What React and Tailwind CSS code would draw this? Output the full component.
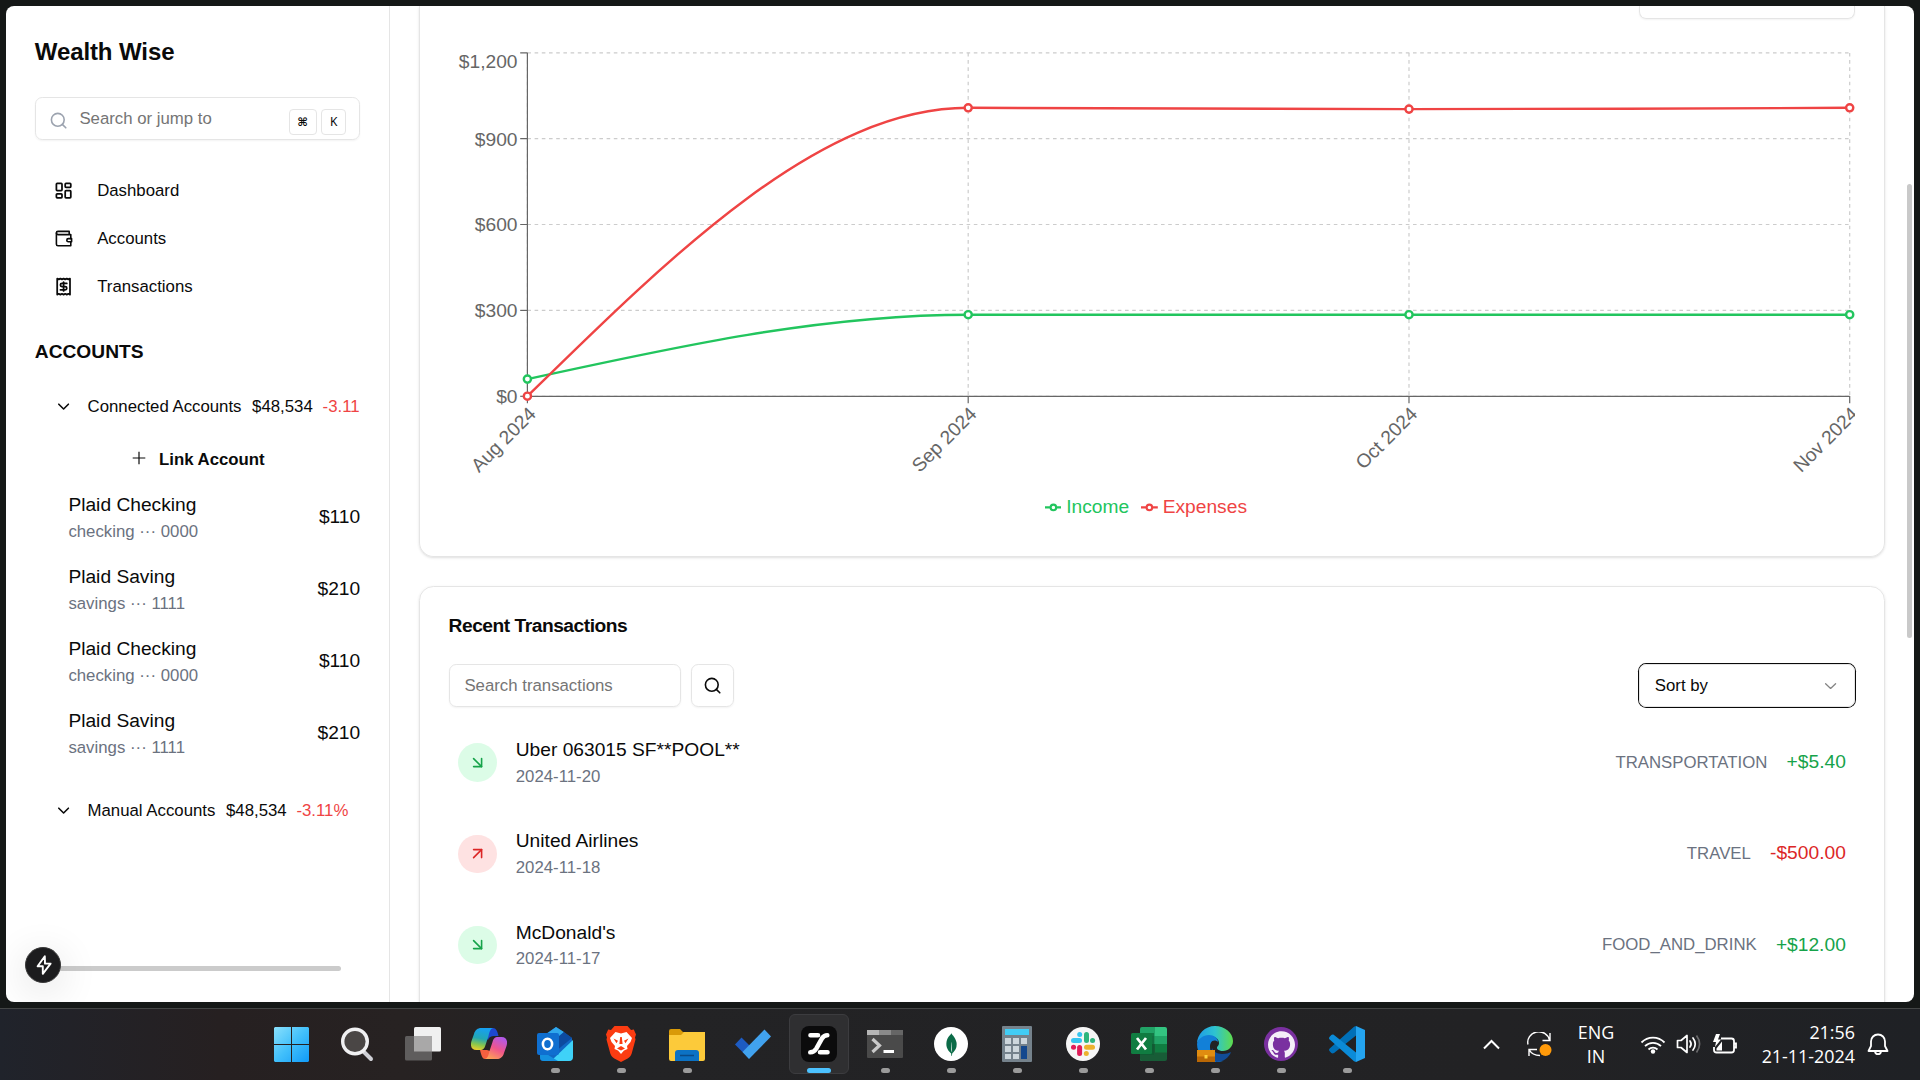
import React from "react";
import {
  ArrowDownRight,
  ArrowUpRight,
  ChevronDown,
  LayoutDashboard,
  Search,
} from "lucide-react";
import { SiGithub, SiMongodb } from "react-icons/si";

const accounts = [
  { name: "Plaid Checking", kind: "checking ··· 0000", amount: "$110" },
  { name: "Plaid Saving", kind: "savings ··· 1111", amount: "$210" },
  { name: "Plaid Checking", kind: "checking ··· 0000", amount: "$110" },
  { name: "Plaid Saving", kind: "savings ··· 1111", amount: "$210" },
];

const transactions = [
  { name: "Uber 063015 SF**POOL**", date: "2024-11-20", category: "TRANSPORTATION", amount: "+$5.40", credit: true },
  { name: "United Airlines", date: "2024-11-18", category: "TRAVEL", amount: "-$500.00", credit: false },
  { name: "McDonald's", date: "2024-11-17", category: "FOOD_AND_DRINK", amount: "+$12.00", credit: true },
];

function WalletIcon() {
  return (
    <svg className="size-[19.2px]" viewBox="0 0 24 24" fill="none" stroke="currentColor" strokeWidth="2" strokeLinecap="round" strokeLinejoin="round">
      <path d="M21 12V7H5a2 2 0 0 1 0-4h14v4" />
      <path d="M3 5v14a2 2 0 0 0 2 2h16v-5" />
      <path d="M18 12a2 2 0 0 0 0 4h4v-4Z" />
    </svg>
  );
}

function ReceiptIcon() {
  return (
    <svg className="size-[19.2px]" viewBox="0 0 24 24" fill="none" stroke="currentColor" strokeWidth="2.2" strokeLinecap="round" strokeLinejoin="round">
      <path d="M4 2v20l2-1 2 1 2-1 2 1 2-1 2 1 2-1 2 1V2l-2 1-2-1-2 1-2-1-2 1-2-1-2 1Z" />
      <path d="M16 8h-6a2 2 0 1 0 0 4h4a2 2 0 1 1 0 4H8" />
      <path d="M12 17.5v-11" />
    </svg>
  );
}

function NavItem({ icon, label }) {
  return (
    <a className="flex h-[43.2px] items-center gap-6 px-[19.2px] text-[16.8px] leading-6">
      {icon}
      {label}
    </a>
  );
}

function AccountGroup({ label, change }) {
  return (
    <div className="flex h-[43.2px] items-center overflow-hidden pl-[19.2px] text-[16.8px] leading-6 whitespace-nowrap">
      <ChevronDown className="mr-[14.4px] size-[19.2px] shrink-0" />
      <span>{label}</span>
      <span className="ml-[10.6px]">$48,534</span>
      <span className="ml-[9.8px] text-[#ef4444]">{change}</span>
    </div>
  );
}

function Sidebar() {
  return (
    <aside className="relative flex w-[384px] shrink-0 flex-col border-r border-[#e5e5e5] p-[28.8px]">
      <h1 className="text-2xl leading-[33.6px] font-bold tracking-[-0.1px]">Wealth Wise</h1>

      <div className="mt-[28.8px] flex h-[43.2px] shrink-0 items-center rounded-[7.2px] border border-[#e5e5e5] pr-[13px] pl-[13.4px] shadow-xs">
        <Search className="mt-1 size-[19.2px] shrink-0 text-[#9ca3af]" />
        <span className="ml-[11px] flex-1 text-[16.8px] leading-6 text-[#757575]">Search or jump to</span>
        <kbd className="mt-[7px] flex h-[26px] w-7 items-center justify-center rounded-[4px] border border-[#e5e5e5] pr-px font-['DejaVu_Sans',sans-serif] text-[11.5px] font-bold">⌘</kbd>
        <kbd className="mt-[7px] ml-1 flex h-[26px] w-[25px] items-center justify-center rounded-[4px] border border-[#e5e5e5] font-['Noto_Sans',sans-serif] text-[12px]">K</kbd>
      </div>

      <nav className="mt-[28.8px] flex flex-col gap-[4.8px]">
        <NavItem icon={<LayoutDashboard className="size-[19.2px]" strokeWidth={2.2} />} label="Dashboard" />
        <NavItem icon={<WalletIcon />} label="Accounts" />
        <NavItem icon={<ReceiptIcon />} label="Transactions" />
      </nav>

      <h2 className="mt-[29.6px] text-[19.2px] leading-[28.8px] font-semibold">ACCOUNTS</h2>

      <div className="mt-[18.4px]">
        <AccountGroup label="Connected Accounts" change="-3.11" />
        <button className="mt-[10.4px] flex h-[43.2px] w-full items-center pl-[95.4px] text-[16.8px] leading-6 font-semibold">
          <svg className="mr-[10.8px] -mt-1 size-[18px]" viewBox="0 0 15 15" fill="currentColor">
            <path d="M7 2.25h1v4.75h4.75v1H8v4.75H7V8H2.25V7H7z" />
          </svg>
          Link Account
        </button>
        <ul className="mt-[9.6px] flex flex-col gap-[19.2px] pl-[33.6px]">
          {accounts.map((a, i) => (
            <li key={i} className="flex items-center justify-between">
              <div>
                <p className="text-[19.2px] leading-[28.8px]">{a.name}</p>
                <p className="text-[16.8px] leading-6 text-[#6b7280]">{a.kind}</p>
              </div>
              <span className="text-[19.2px] leading-[28.8px]">{a.amount}</span>
            </li>
          ))}
        </ul>
      </div>

      <div className="mt-[28.8px]">
        <AccountGroup label="Manual Accounts" change="-3.11%" />
      </div>

      <div className="absolute bottom-[31px] left-[29px] h-[5px] w-[306px] rounded-full bg-[#cbcbcb]" />
      <div className="absolute bottom-[19px] left-[19px] flex size-9 items-center justify-center rounded-full border border-[#3a3a3a] bg-[#1c1c1e] shadow-[0_8px_40px_rgba(0,0,0,0.14)]">
        <svg className="ml-px h-5 w-4 text-white" viewBox="0 0 16 20" fill="none" stroke="currentColor" strokeWidth="1.9" strokeLinejoin="round">
          <path d="M8.8 1.2L1.6 11.2h5.2v7.6L14.6 8.6H9z" />
        </svg>
      </div>
    </aside>
  );
}

const GRID_X = [78.4, 519.2, 960, 1400.7];
const GRID_Y = [52.9, 138.6, 224.5, 310.4, 396.3];
const Y_LABELS = [
  ["$1,200", 68],
  ["$900", 145.6],
  ["$600", 231],
  ["$300", 317],
  ["$0", 402.8],
];
const MONTHS = ["Aug 2024", "Sep 2024", "Oct 2024", "Nov 2024"];

function Series({ color, values }) {
  const [a, b, c, d] = values;
  const dx = (GRID_X[1] - GRID_X[0]) / 3;
  const path =
    `M${GRID_X[0]},${a}C${GRID_X[0] + dx},${(a + b) / 2},${GRID_X[1] - dx},${b},${GRID_X[1]},${b}` +
    `C${GRID_X[1] + dx},${b},${GRID_X[2] - dx},${c},${GRID_X[2]},${c}` +
    `C${GRID_X[2] + dx},${c},${GRID_X[3] - dx},${(c + d) / 2},${GRID_X[3]},${d}`;
  return (
    <g stroke={color} strokeWidth="2.4">
      <path d={path} fill="none" />
      {values.map((v, i) => (
        <circle key={i} cx={GRID_X[i]} cy={v} r="3.6" fill="#fff" />
      ))}
    </g>
  );
}

function Chart() {
  return (
    <svg className="block h-[480px] w-[1406.4px] overflow-hidden font-['Liberation_Sans',Arial,sans-serif] text-[19.2px]" viewBox="0 6 1406.4 480">
      <g stroke="#ccc" strokeWidth="1.2" strokeDasharray="3.6 3.6">
        {GRID_Y.map((y) => (
          <line key={y} x1={GRID_X[0]} x2={GRID_X[3]} y1={y} y2={y} />
        ))}
        {GRID_X.map((x) => (
          <line key={x} x1={x} x2={x} y1={GRID_Y[0]} y2={GRID_Y[4]} />
        ))}
      </g>
      <g stroke="#666" strokeWidth="1.2">
        <line x1={GRID_X[0]} x2={GRID_X[3]} y1="396.300" y2="396.300" />
        <line x1={GRID_X[0]} x2={GRID_X[0]} y1="52.700" y2="396.300" />
        {GRID_Y.map((y) => (
          <line key={y} x1={GRID_X[0] - 7.2} x2={GRID_X[0]} y1={y} y2={y} />
        ))}
        {GRID_X.map((x) => (
          <line key={x} x1={x} x2={x} y1="396" y2="403.200" />
        ))}
      </g>
      <g fill="#666" textAnchor="end">
        {Y_LABELS.map(([t, y]) => (
          <text key={t} x={GRID_X[0] - 9.9} y={y}>{t}</text>
        ))}
        {MONTHS.map((m, i) => (
          <text key={m} transform={`translate(${GRID_X[i]} 405.600) rotate(-45)`} y="13.600">{m}</text>
        ))}
      </g>
      <Series color="#22c55e" values={[379.1, 314.7, 314.7, 314.7]} />
      <Series color="#ef4444" values={[396.2, 107.8, 109.1, 107.8]} />
    </svg>
  );
}

function LegendItem({ label, className }) {
  return (
    <span className={className}>
      <svg className="mr-[4.800px] size-[16.800px]" viewBox="0 0 32 32" fill="none" stroke="currentColor" strokeWidth="4">
        <path d="M0,16h10.667A5.333,5.333,0,1,1,21.333,16H32M21.333,16A5.333,5.333,0,1,1,10.667,16" />
      </svg>
      {label}
    </span>
  );
}

function ChartCard() {
  return (
    <section className="flex h-[551.2px] shrink-0 flex-col rounded-b-[14.4px] border border-t-0 border-[#e5e5e5] px-[28.8px] shadow-sm">
      <div className="-mb-[13px] h-[13px] w-[216px] self-end rounded-b-[7.2px] border border-t-0 border-[#e5e5e5] shadow-xs" />
      <Chart />
      <div className="mt-[7px] flex justify-center gap-3 pr-[12.4px] text-[19.2px] leading-[28.8px]">
        <LegendItem label="Income" className="flex items-center text-[#22c55e]" />
        <LegendItem label="Expenses" className="flex items-center text-[#ef4444]" />
      </div>
    </section>
  );
}

function TransactionRow({ t }) {
  return (
    <li className="flex items-center justify-between px-[9.6px]">
      <div className="flex items-center gap-[19.2px]">
        {t.credit ? (
          <span className="flex size-[38.4px] items-center justify-center rounded-full bg-[#dcfce7] text-[#16a34a]">
            <ArrowDownRight className="size-[19.2px]" />
          </span>
        ) : (
          <span className="flex size-[38.4px] items-center justify-center rounded-full bg-[#fee2e2] text-[#dc2626]">
            <ArrowUpRight className="size-[19.2px]" />
          </span>
        )}
        <div>
          <p className="text-[19.2px] leading-[28.8px]">{t.name}</p>
          <p className="text-[16.8px] leading-6 text-[#6b7280]">{t.date}</p>
        </div>
      </div>
      <div className="flex items-center gap-[19.2px]">
        <span className="text-[16.8px] leading-6 text-[#6b7280]">{t.category}</span>
        {t.credit ? (
          <span className="text-[19.2px] leading-[28.8px] text-[#16a34a]">{t.amount}</span>
        ) : (
          <span className="text-[19.2px] leading-[28.8px] text-[#dc2626]">{t.amount}</span>
        )}
      </div>
    </li>
  );
}

function TransactionsCard() {
  return (
    <section className="h-[480px] shrink-0 rounded-[14.4px] border border-[#e5e5e5] px-[28.8px] pt-[28.8px] shadow-sm">
      <h3 className="text-[19.2px] leading-[19.2px] font-semibold tracking-tight">Recent Transactions</h3>
      <div className="mt-[29px] flex h-[43.2px] items-center text-[16.8px] leading-6">
        <div className="flex h-full w-[232.6px] items-center rounded-[7.2px] border border-[#e5e5e5] px-[14.8px] pt-px text-[#757575] shadow-xs">Search transactions</div>
        <button className="ml-[9.6px] flex h-full w-[43.2px] items-center justify-center rounded-[7.2px] border border-[#e5e5e5] shadow-xs">
          <Search className="size-[19.2px]" />
        </button>
        <button className="ml-auto flex h-full w-[216px] items-center justify-between rounded-[7.2px] border border-[#e5e5e5] pt-px pr-[14.4px] pl-[14.4px] ring-1 ring-[#0a0a0a]">
          Sort by
          <svg className="size-[19.2px] opacity-50" viewBox="0 0 15 15" fill="none" stroke="currentColor" strokeLinecap="round" strokeLinejoin="round">
            <path d="M3.6 6.100L7.500 9.700L11.400 6.100" />
          </svg>
        </button>
      </div>
      <ul className="mt-[29px] flex flex-col gap-[38.4px]">
        {transactions.map((t) => (
          <TransactionRow key={t.name} t={t} />
        ))}
      </ul>
    </section>
  );
}

function OutlookIcon() {
  return (
    <svg className="size-9" viewBox="0 0 36 36">
      <path d="M3 12L19 1l16 11v20a3 3 0 0 1-3 3H6a3 3 0 0 1-3-3z" fill="#1068c4" />
      <path d="M5 11L19 1l8 5-12 10z" fill="#2fa8ec" />
      <path d="M27 6l8 6-16 13-4-9z" fill="#0d4ba0" />
      <path d="M36 14v17a4 4 0 0 1-4 4H14z" fill="#3fd2f8" />
      <path d="M3 24l18 11H7a4 4 0 0 1-4-4z" fill="#1490df" />
      <rect x="0" y="7" width="22" height="22" rx="2" fill="#0f6fd0" />
      <ellipse cx="10.500" cy="18" rx="4.600" ry="5.300" fill="none" stroke="#fff" strokeWidth="2.600" />
    </svg>
  );
}

function CopilotIcon() {
  return (
    <svg className="size-9" viewBox="0 0 36 36">
      <defs>
        <linearGradient id="copilotLeft" x1="0.4" y1="0" x2="0.2" y2="1">
          <stop offset="0" stopColor="#17a0f0" />
          <stop offset="0.45" stopColor="#22a7b4" />
          <stop offset="0.75" stopColor="#8cc84a" />
          <stop offset="1" stopColor="#f0cf2c" />
        </linearGradient>
        <linearGradient id="copilotRight" x1="0.7" y1="0" x2="0.2" y2="1">
          <stop offset="0" stopColor="#b259e8" />
          <stop offset="0.5" stopColor="#f0558c" />
          <stop offset="1" stopColor="#fda455" />
        </linearGradient>
      </defs>
      <path d="M17 2h5c3 0 4.500 3 5.500 8H23c-3 0-5 1-6 4l-4-5z" fill="#1c48d0" />
      <path d="M9 24h7l6 2-3 7h-5c-3 0-4-5-5-9z" fill="#f3603f" />
      <path d="M10 2h12c-3 1-3.500 4-4.500 8l-3 9c-1 4-3 5-5 5H5.500c-5 0-6.500-4-5-9L3 8c1-4 4-6 7-6z" fill="url(#copilotLeft)" />
      <path d="M26 33H14c3-1 3.500-4 4.500-8l3-9c1-4 3-5 5-5h4c5 0 6.500 4 5 9L33 27c-1 4-4 6-7 6z" fill="url(#copilotRight)" />
    </svg>
  );
}

function SlackIcon() {
  return (
    <svg className="size-9" viewBox="0 0 36 36">
      <circle cx="18" cy="18" r="17" fill="#f6f6f6" />
      <g strokeWidth="5" strokeLinecap="round">
        <path d="M8.500 14.500h6" stroke="#36c5f0" />
        <path d="M14.700 8.400v.1" stroke="#36c5f0" />
        <path d="M21.500 8.500v6" stroke="#2eb67d" />
        <path d="M27.500 14.600h.1" stroke="#2eb67d" />
        <path d="M21.500 21.300h6" stroke="#ecb22e" />
        <path d="M21.300 27.500v.1" stroke="#ecb22e" />
        <path d="M14.600 21.500v6" stroke="#e01e5a" />
        <path d="M8.500 21.300h.1" stroke="#e01e5a" />
      </g>
    </svg>
  );
}

function ExcelIcon() {
  return (
    <svg className="size-9" viewBox="0 0 36 36">
      <path d="M9 3a2 2 0 0 1 2-2h13v34H11a2 2 0 0 1-2-2z" fill="#21a366" />
      <path d="M24 1h10a2 2 0 0 1 2 2v7H24z" fill="#33c481" />
      <path d="M9 10h15v8H9z" fill="#1c9158" />
      <path d="M24 10h12v8H24z" fill="#21a366" />
      <path d="M9 18h27v15a2 2 0 0 1-2 2H11a2 2 0 0 1-2-2z" fill="#185c37" />
      <path d="M24 18h12v8.500H24z" fill="#107c41" />
      <path d="M9 7h14v22H9z" fill="#0b5a30" opacity="0.6" />
      <rect x="0" y="7" width="21" height="21" rx="1.500" fill="#107c41" />
      <path d="M6 12l9 11.500M15 12L6 23.500" stroke="#fff" strokeWidth="2.700" />
    </svg>
  );
}

function EdgeIcon() {
  return (
    <svg className="size-9" viewBox="0 0 36 36">
      <defs>
        <linearGradient id="edgeTop" x1="0" y1="0.4" x2="1" y2="0.4">
          <stop offset="0" stopColor="#1e9be8" />
          <stop offset="0.5" stopColor="#2ec3d0" />
          <stop offset="1" stopColor="#5fdc4d" />
        </linearGradient>
      </defs>
      <path d="M0 18C0 8 8 0 18 0s18 7 18 15c0 6-5 10-10 10-4 0-6-2-6-3 0-2 2-2 2-5 0-4-4-7-9-7C6 10 1 14 0 18z" fill="url(#edgeTop)" />
      <path d="M0 18c1-5 6-9 12-9 5 0 9 3 9 7-1-1-2-1.500-3.500-1.500C14 14.500 13 18 13 21c0 7 5 14 13 14-3 1-6 1-8 1C8 36 0 28 0 18z" fill="#1280d8" />
      <path d="M15 22c1 3 5 6 10 6 4 0 7-1 9-2-2 6-8 10-15 10-3-3-5-9-4-14z" fill="#114c97" />
      <rect x="0" y="24" width="18" height="12" fill="#b96705" />
      <rect x="0" y="24" width="18" height="6.500" fill="#e08c10" />
      <rect x="7.500" y="29" width="3" height="3.500" fill="#ffd23c" />
    </svg>
  );
}

function VsCodeIcon() {
  return (
    <svg className="size-9" viewBox="0 0 36 36">
      <path d="M27 0v9.500L5 27c-1 .6-2 .5-2.700-.1L.7 25.300c-.9-.9-.9-2 0-2.800L25 .8z" fill="#0070b8" />
      <path d="M27 36v-9.500L5 9c-1-.6-2-.5-2.700.1L.7 10.700c-.9.900-.9 2 0 2.800L25 35.200z" fill="#0b8bd8" />
      <path d="M27 0L36 4v28l-9 4z" fill="#24a4f0" />
    </svg>
  );
}

const icons = {
  windows: (
    <svg className="size-[35px]" viewBox="0 0 35 35">
      <defs>
        <linearGradient id="winFill" gradientUnits="userSpaceOnUse" x1="0" y1="0" x2="35" y2="35">
          <stop offset="0" stopColor="#8ae0fc" />
          <stop offset="0.5" stopColor="#42c0fb" />
          <stop offset="1" stopColor="#109af8" />
        </linearGradient>
      </defs>
      <path d="M1 0h16v17H0V1zM18 0h16l1 1v16H18zM0 18h17v17H1l-1-1zM18 18h17v16l-1 1H18z" fill="url(#winFill)" />
    </svg>
  ),
  search: (
    <svg className="size-9" viewBox="0 0 36 36" fill="none">
      <path d="M24.500 25.500L32 33" stroke="#cfd0d6" strokeWidth="4" strokeLinecap="round" />
      <circle cx="16" cy="15.500" r="12.300" fill="#4a4645" stroke="#f0f0f2" strokeWidth="3.400" />
    </svg>
  ),
  taskview: (
    <svg className="size-9" viewBox="0 0 36 36">
      <rect x="9" y="1" width="27" height="24.500" rx="1.500" fill="#f0f0f0" />
      <rect x="0" y="10" width="27" height="24.500" rx="1.500" fill="#5f5d5d" />
      <rect x="9" y="10" width="18" height="15.500" fill="#a9a8a8" />
    </svg>
  ),
  copilot: <CopilotIcon />,
  outlook: <OutlookIcon />,
  brave: (
    <svg className="size-9" viewBox="0 0 36 36">
      <path d="M11.500 0h13l3.500 4 2.800-.5L33 8.500l-1 3 .5 2-3.800 14c-1 3-2 3.500-4 5L18 36l-6.700-3.500c-2-1.500-3-2-4-5l-3.800-14 .5-2-1-3L5.200 3.500 8 4z" fill="#fb3c12" />
      <path d="M12.500 6l5.500 1.500L23.500 6l5.500 6-1.500 4-3.500 4 .5 3-3.500 1.500L18 28l-3-3.500-3.500-1.500.5-3L8.500 16 7 12z" fill="#fff" />
      <path d="M10.500 12.500l4.500 2.200-1.500 2.600zM25.500 12.500l-4.500 2.200 1.500 2.600zM18 20l-4 2.500 4 2 4-2zM17.200 11h1.600l.8 7h-3.200z" fill="#fb3c12" />
    </svg>
  ),
  explorer: (
    <svg className="size-9" viewBox="0 0 36 36">
      <path d="M0 5a2 2 0 0 1 2-2h9l3 3h20a2 2 0 0 1 2 2v4H0z" fill="#d99a08" />
      <path d="M0 9h12l3-3h21v27a2 2 0 0 1-2 2H2a2 2 0 0 1-2-2z" fill="#fcca3a" />
      <path d="M6 35V27a3 3 0 0 1 3-3h18a3 3 0 0 1 3 3v8z" fill="#0c72c4" />
      <path d="M11 29.500h14" stroke="#0a4a86" strokeWidth="1.500" />
    </svg>
  ),
  todo: (
    <svg className="size-9" viewBox="0 0 36 36">
      <path d="M0 18.500l6.500-7 14 14-6.500 7z" fill="#1d5bc2" />
      <path d="M7.500 26L29.500 3.500 36 10.500 14 33z" fill="#41a2ee" />
    </svg>
  ),
  zed: (
    <svg className="size-9 shrink-0" viewBox="0 0 36 36">
      <rect width="36" height="36" rx="8" fill="#0b0b0c" />
      <path d="M9.500 9.300H17M26.300 9.200c-2.300 0-3.800 1-5.300 3.200L15.300 22.600c-1.400 2.300-3 3.600-6 3.700M19 26.300h7.500" stroke="#fff" strokeWidth="4.600" fill="none" strokeLinecap="round" />
    </svg>
  ),
  terminal: (
    <svg className="size-9" viewBox="0 0 36 36">
      <rect y="4" width="36" height="28" rx="1" fill="#4a4a4a" />
      <path d="M0 4h12v5H0z" fill="#b5b5b5" />
      <path d="M12 4h12v5H12z" fill="#8a8a8a" />
      <path d="M24 4h12v5H24z" fill="#666" />
      <path d="M5.500 13l7 6.500-7 6.500" stroke="#c9c9c9" strokeWidth="3.200" fill="none" />
      <path d="M16.500 25.500H27" stroke="#fff" strokeWidth="3" />
    </svg>
  ),
  mongo: (
    <span className="flex size-[34px] items-center justify-center rounded-full bg-white text-[#0b6b47]">
      <SiMongodb className="size-[23px]" />
    </span>
  ),
  calculator: (
    <svg className="size-9" viewBox="0 0 36 36">
      <rect x="3" width="30" height="36" rx="1" fill="#75828c" />
      <rect x="6" y="3" width="24" height="6" fill="#42cdf5" />
      <g fill="#cdd6dc">
        <path d="M6 12h6v6H6zM14 12h6v6h-6zM22 12h6v6h-6zM6 20h6v6H6zM14 20h6v6h-6zM6 28h6v5H6zM14 28h6v5h-6z" />
      </g>
      <path d="M22 20h6v13h-6z" fill="#14488e" />
    </svg>
  ),
  slack: <SlackIcon />,
  excel: <ExcelIcon />,
  edge: <EdgeIcon />,
  github: (
    <span className="flex size-[34px] items-center justify-center rounded-full bg-[#7a30a0] text-[#f4eef8]">
      <SiGithub className="size-[27px]" />
    </span>
  ),
  vscode: <VsCodeIcon />,
};

const apps = [
  ["windows", false], ["search", false], ["taskview", false], ["copilot", false],
  ["outlook", true], ["brave", true], ["explorer", true], ["todo", false],
  ["zed", true], ["terminal", true], ["mongo", true], ["calculator", true],
  ["slack", true], ["excel", true], ["edge", true], ["github", true], ["vscode", true],
];

function TaskbarApp({ name, running }) {
  if (name === "zed") {
    return (
      <div className="flex h-[60px] w-[60px] flex-col items-center rounded-md border border-[#3c3c3f] bg-[#2f2f31] pt-[11px]">
        {icons[name]}
        <span className="mt-[6px] h-[5px] w-6 shrink-0 rounded-full bg-[#4cc2ff]" />
      </div>
    );
  }
  return (
    <div className="flex h-[60px] w-[60px] flex-col items-center pt-3">
      <span className="flex size-9 items-center justify-center">{icons[name]}</span>
      {running && <span className="mt-[6px] h-[5px] w-[9px] rounded-full bg-[#9b9b9b]" />}
    </div>
  );
}

function Tray() {
  return (
    <div className="ml-auto flex h-[60px] items-center font-['Open_Sans','Noto_Sans',sans-serif] text-[17.9px] leading-6 text-white">
      <svg className="h-[11px] w-[17px]" viewBox="0 0 17 11" fill="none" stroke="currentColor" strokeWidth="2">
        <path d="M1 9.500l7.500-7.500L16 9.500" />
      </svg>
      <svg className="ml-[27px] h-[25px] w-[25px]" viewBox="0 0 25 25" fill="none" stroke="currentColor" strokeWidth="1.400">
        <path d="M1 12.500A11 10.500 0 0 1 22.500 8M23 1v7.500h-7.500M2 24v-6.500h8M2 17.500c3 5.500 8 6 11 6" />
        <circle cx="18.500" cy="18" r="6" fill="#ff9a0a" stroke="none" />
      </svg>
      <div className="ml-[26px] flex w-[36px] flex-col items-center">
        <span>ENG</span>
        <span>IN</span>
      </div>
      <svg className="ml-[26px] h-[19px] w-[26px]" viewBox="0 0 26 19" fill="none" stroke="currentColor" strokeWidth="1.800">
        <path d="M1.500 7.500a16 16 0 0 1 23 0M5 11.200a11.300 11.300 0 0 1 16 0M8.500 14.500a6.500 6.500 0 0 1 9 0" />
        <circle cx="13" cy="16.500" r="2.200" fill="currentColor" stroke="none" />
      </svg>
      <svg className="ml-[10px] h-[20px] w-[25px]" viewBox="0 0 25 20" fill="none" stroke="currentColor" strokeWidth="1.700" strokeLinejoin="round">
        <path d="M1.500 6.500h3.500l6-5v17l-6-5H1.500z" />
        <path d="M14 7c1.500 2 1.500 4 0 6M17 4c3 4 3 8 0 12" strokeLinecap="round" />
        <path d="M20.500 1.500c4 5.500 4 11.500 0 17" stroke="#6a6a6c" />
      </svg>
      <svg className="ml-[11px] h-[21px] w-[26px]" viewBox="0 0 26 21" fill="none" stroke="currentColor" strokeWidth="1.800">
        <path d="M9 4.500h10.500a2.500 2.500 0 0 1 2.500 2.500v9a2.500 2.500 0 0 1-2.500 2.500h-15A2.500 2.500 0 0 1 2 16v-3M22.500 9.500h1.500v4h-1.500" />
        <path d="M4 0L1 8h3l-1 5 6-7.500H6L8 0zM4.500 16.500v-2L10 7.500v9z" fill="currentColor" stroke="none" />
      </svg>
      <div className="ml-[23px] flex w-[94px] flex-col items-end">
        <span>21:56</span>
        <span>21-11-2024</span>
      </div>
      <svg className="ml-[12px] h-[23px] w-[22px]" viewBox="0 0 22 23" fill="none" stroke="currentColor" strokeWidth="1.800" strokeLinejoin="round">
        <path d="M11 1.500c-4 0-7 3-7 7V13l-2.500 5h19L18 13V8.500c0-4-3-7-7-7z" />
        <path d="M8 18.500c.5 3.500 5.500 3.500 6 0" />
      </svg>
    </div>
  );
}

export default function App() {
  return (
    <div className="flex h-[1080px] w-[1920px] flex-col overflow-hidden bg-[#151817] font-['Liberation_Sans',Arial,sans-serif] text-[#0a0a0a]">
      <div className="relative mx-[6px] mt-[6px] flex h-[996px] shrink-0 overflow-hidden rounded-lg bg-white">
        <Sidebar />
        <main className="flex min-w-0 flex-1 flex-col gap-[28.8px] px-[28.8px]">
          <ChartCard />
          <TransactionsCard />
        </main>
        <div className="absolute top-[178px] right-[2px] h-[454px] w-[5px] rounded-full bg-[#c9c9c9]" />
      </div>
      <footer className="mt-[6px] flex h-[72px] shrink-0 border-t border-[#434545] bg-[linear-gradient(90deg,#20232b_0px,#262021_220px,#272222_400px,#232325_600px,#222224_1500px,#1f2125_1920px)] pt-[5px] pr-[31px] pl-[261px]">
        <div className="flex gap-1.5">
          {apps.map(([name, running]) => (
            <TaskbarApp key={name} name={name} running={running} />
          ))}
        </div>
        <Tray />
      </footer>
    </div>
  );
}
